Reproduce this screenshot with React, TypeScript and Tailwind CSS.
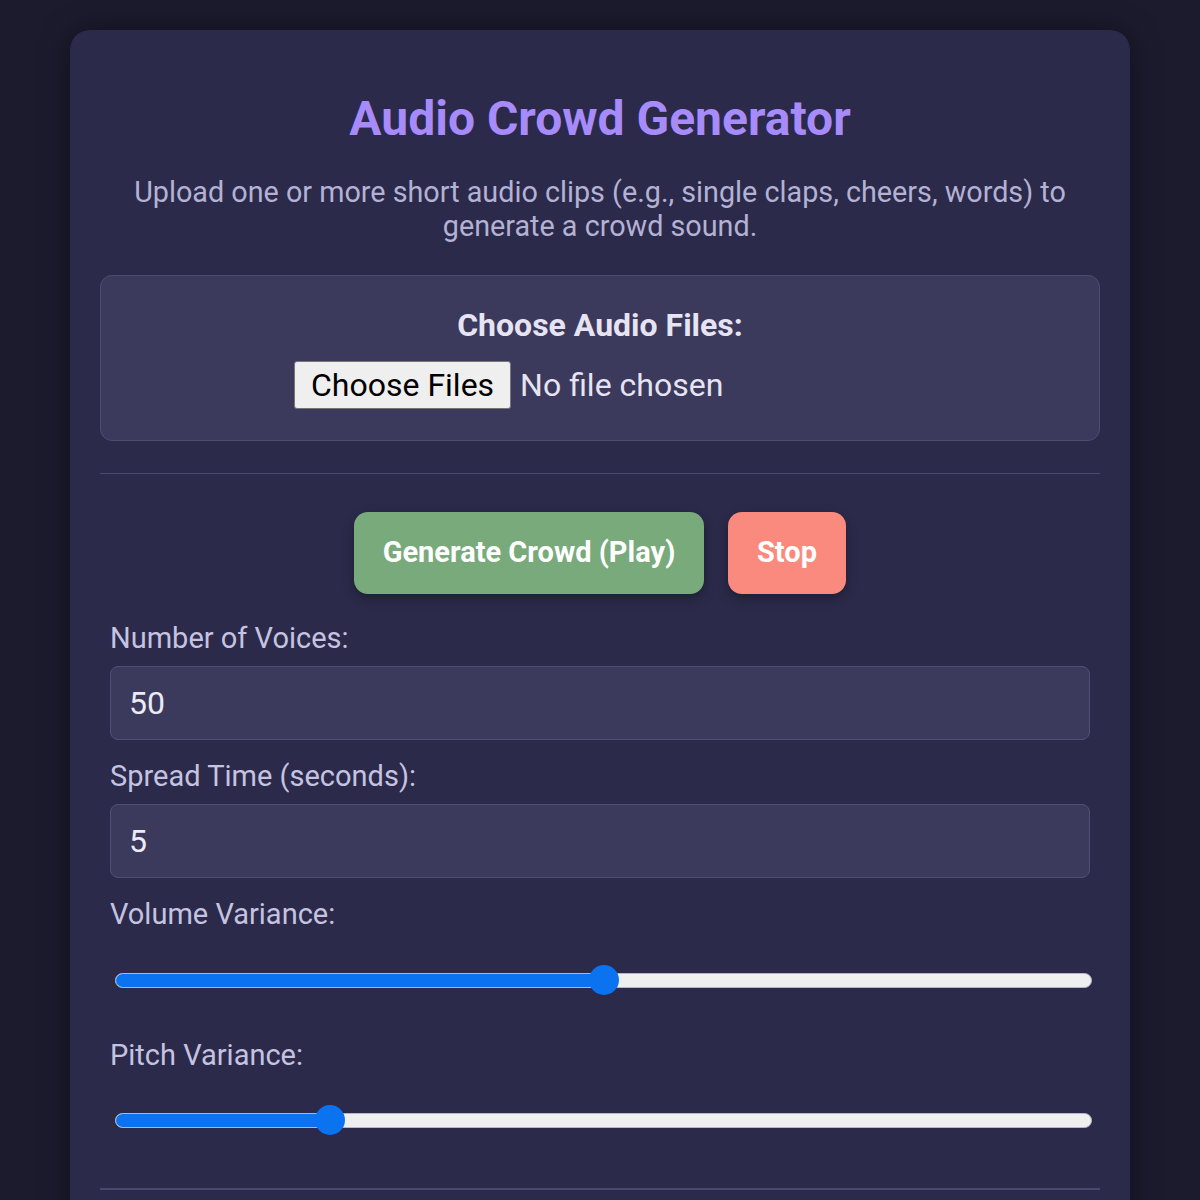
import { useState } from "react";

function Slider({ value }: { value: number }) {
  // value 0..1, thumb travels inside the track
  return (
    <div className="relative h-[30px] ml-[5px] -mr-[2px] flex items-center">
      <div className="w-full h-[15px] rounded-full bg-[#efefef] border border-[#b5b5c5] overflow-hidden">
        <div
          className="h-full bg-[#0b72f0]"
          style={{ width: `calc(15px + (100% - 30px) * ${value})` }}
        />
      </div>
      <div
        className="absolute top-0 w-[30px] h-[30px] rounded-full bg-[#0b72f0]"
        style={{ left: `calc((100% - 30px) * ${value})` }}
      />
    </div>
  );
}

export default function App() {
  const [voices, setVoices] = useState("50");
  const [spread, setSpread] = useState("5");

  return (
    <div
      className="min-h-[1200px] bg-[#1c1b2e] pt-[30px] px-[70px]"
      style={{ fontFamily: "Roboto, 'Noto Sans', sans-serif" }}
    >
      <div className="bg-[#2b2a4a] rounded-[20px] px-[30px] pt-[62px] pb-[40px] shadow-[0_0_30px_rgba(0,0,0,0.4)]">
        <h1 className="text-center text-[48px] leading-[54px] font-bold text-[#a78bfa]">
          Audio Crowd Generator
        </h1>
        <p className="mt-[29px] text-center text-[28.75px] leading-[34px] text-[#b4b2d4] px-[20px]">
          Upload one or more short audio clips (e.g., single claps, cheers, words) to generate a
          crowd sound.
        </p>

        <div className="mt-[32px] h-[166px] bg-[#3c3a5c] border border-[#4d4b73] rounded-[12px] flex flex-col items-center pt-[30px]">
          <div className="text-[32px] leading-[38px] font-bold text-[#e6e4f2]">
            Choose Audio Files:
          </div>
          {/* native file input keeps a fixed width, text sits at its left */}
          <div className="mt-[17px] w-[612px] flex items-center gap-[9px]">
            <button className="h-[48px] px-[16px] bg-[#efefef] border border-[#767676] rounded-[3px] text-[32px] leading-[38px] text-black">
              Choose Files
            </button>
            <span className="text-[32px] leading-[38px] text-[#e6e4f2]">No file chosen</span>
          </div>
        </div>

        <div className="mt-[32px] h-px bg-[#4a4870]" />

        <div className="mt-[38px] flex justify-center gap-[24px]">
          <button className="h-[82px] w-[350px] rounded-[14px] bg-[#79aa7b] text-white text-[29px] font-bold shadow-[0_4px_12px_rgba(0,0,0,0.3)]">
            Generate Crowd (Play)
          </button>
          <button className="h-[82px] w-[118px] rounded-[14px] bg-[#fa8a7d] text-white text-[29px] font-bold shadow-[0_4px_12px_rgba(0,0,0,0.3)]">
            Stop
          </button>
        </div>

        <div className="mt-[27px] px-[10px] text-[#c5c3e0]">
          <label className="block text-[29px] leading-[34px]">Number of Voices:</label>
          <input
            className="mt-[11px] w-full h-[74px] bg-[#3c3a5c] border border-[#514f75] rounded-[8px] px-[18px] text-[32px] text-[#ecebf5] outline-none"
            value={voices}
            onChange={(e) => setVoices(e.target.value)}
          />

          <label className="block mt-[19px] text-[29px] leading-[34px]">
            Spread Time (seconds):
          </label>
          <input
            className="mt-[11px] w-full h-[74px] bg-[#3c3a5c] border border-[#514f75] rounded-[8px] px-[18px] text-[32px] text-[#ecebf5] outline-none"
            value={spread}
            onChange={(e) => setSpread(e.target.value)}
          />

          <label className="block mt-[19px] text-[29px] leading-[34px]">Volume Variance:</label>
          <div className="mt-[34px]">
            <Slider value={0.5} />
          </div>

          <label className="block mt-[43px] text-[29px] leading-[34px]">Pitch Variance:</label>
          <div className="mt-[33px]">
            <Slider value={0.211} />
          </div>
        </div>

        <div className="mt-[53px] h-[2px] bg-[#4a4870]" />
        <div className="h-[200px]" />
      </div>
    </div>
  );
}
